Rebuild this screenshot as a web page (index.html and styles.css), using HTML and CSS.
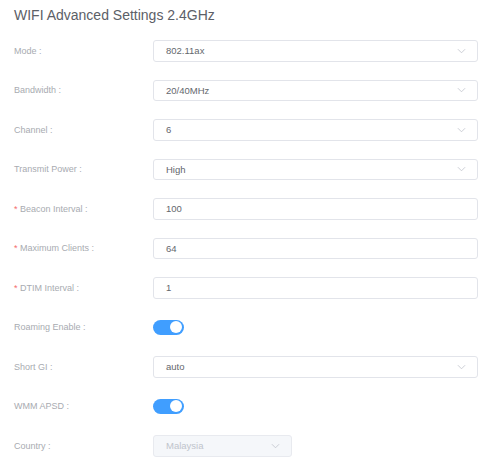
FILE: index.html
```html
<!DOCTYPE html>
<html>
<head>
<meta charset="utf-8">
<link rel="stylesheet" href="styles.css">
</head>
<body>
<div class="page">
  <h1 class="title">WIFI Advanced Settings 2.4GHz</h1>
  <form class="form">
    <div class="row">
      <label class="label">Mode :</label>
      <div class="control select"><span class="value">802.11ax</span><svg class="arrow" viewBox="0 0 10 6"><path d="M1 1l4 4 4-4" fill="none" stroke="#c0c4cc" stroke-width="0.9"/></svg></div>
    </div>
    <div class="row">
      <label class="label">Bandwidth :</label>
      <div class="control select"><span class="value">20/40MHz</span><svg class="arrow" viewBox="0 0 10 6"><path d="M1 1l4 4 4-4" fill="none" stroke="#c0c4cc" stroke-width="0.9"/></svg></div>
    </div>
    <div class="row">
      <label class="label">Channel :</label>
      <div class="control select"><span class="value">6</span><svg class="arrow" viewBox="0 0 10 6"><path d="M1 1l4 4 4-4" fill="none" stroke="#c0c4cc" stroke-width="0.9"/></svg></div>
    </div>
    <div class="row">
      <label class="label">Transmit Power :</label>
      <div class="control select"><span class="value">High</span><svg class="arrow" viewBox="0 0 10 6"><path d="M1 1l4 4 4-4" fill="none" stroke="#c0c4cc" stroke-width="0.9"/></svg></div>
    </div>
    <div class="row">
      <label class="label"><span class="req">*</span> Beacon Interval :</label>
      <div class="control"><span class="value">100</span></div>
    </div>
    <div class="row">
      <label class="label"><span class="req">*</span> Maximum Clients :</label>
      <div class="control"><span class="value">64</span></div>
    </div>
    <div class="row">
      <label class="label"><span class="req">*</span> DTIM Interval :</label>
      <div class="control"><span class="value">1</span></div>
    </div>
    <div class="row">
      <label class="label">Roaming Enable :</label>
      <div class="switch on"><span class="knob"></span></div>
    </div>
    <div class="row">
      <label class="label">Short GI :</label>
      <div class="control select"><span class="value">auto</span><svg class="arrow" viewBox="0 0 10 6"><path d="M1 1l4 4 4-4" fill="none" stroke="#c0c4cc" stroke-width="0.9"/></svg></div>
    </div>
    <div class="row">
      <label class="label">WMM APSD :</label>
      <div class="switch on"><span class="knob"></span></div>
    </div>
    <div class="row">
      <label class="label">Country :</label>
      <div class="control select disabled short"><span class="value">Malaysia</span><svg class="arrow" viewBox="0 0 10 6"><path d="M1 1l4 4 4-4" fill="none" stroke="#c0c4cc" stroke-width="0.9"/></svg></div>
    </div>
  </form>
</div>
</body>
</html>
```

FILE: styles.css
```css
html, body {
  margin: 0;
  padding: 0;
  background: #ffffff;
}
body {
  font-family: "Liberation Sans", Arial, Helvetica, sans-serif;
}
.page {
  padding: 5px 22px 0 14px;
}
.title {
  margin: 0;
  font-size: 14px;
  font-weight: normal;
  line-height: 20px;
  color: #5c6067;
}
.form {
  display: flex;
  flex-direction: column;
  gap: 18px;
  margin-top: 15px;
}
.row {
  display: flex;
  align-items: center;
  height: 21.5px;
}
.label {
  width: 139px;
  flex: none;
  font-size: 9px;
  color: #a8abb1;
}
.req {
  color: #f56c6c;
}
.control {
  flex: 1;
  height: 21.5px;
  box-sizing: border-box;
  border: 1px solid #e2e4ea;
  border-radius: 3px;
  display: flex;
  align-items: center;
  padding: 0 12px;
  font-size: 9.5px;
  color: #64676d;
}
.value {
  flex: 1;
}
.arrow {
  width: 9px;
  height: 6px;
  margin-right: -1px;
}
.disabled {
  background: #f5f7fa;
  color: #c0c4cc;
  border-color: #e8eaef;
}
.short {
  flex: none;
  width: 139px;
}
.switch {
  width: 31px;
  height: 15px;
  border-radius: 8px;
  background: #409eff;
  position: relative;
}
.knob {
  position: absolute;
  right: 2px;
  top: 1.5px;
  width: 12px;
  height: 12px;
  border-radius: 50%;
  background: #ffffff;
}
```
